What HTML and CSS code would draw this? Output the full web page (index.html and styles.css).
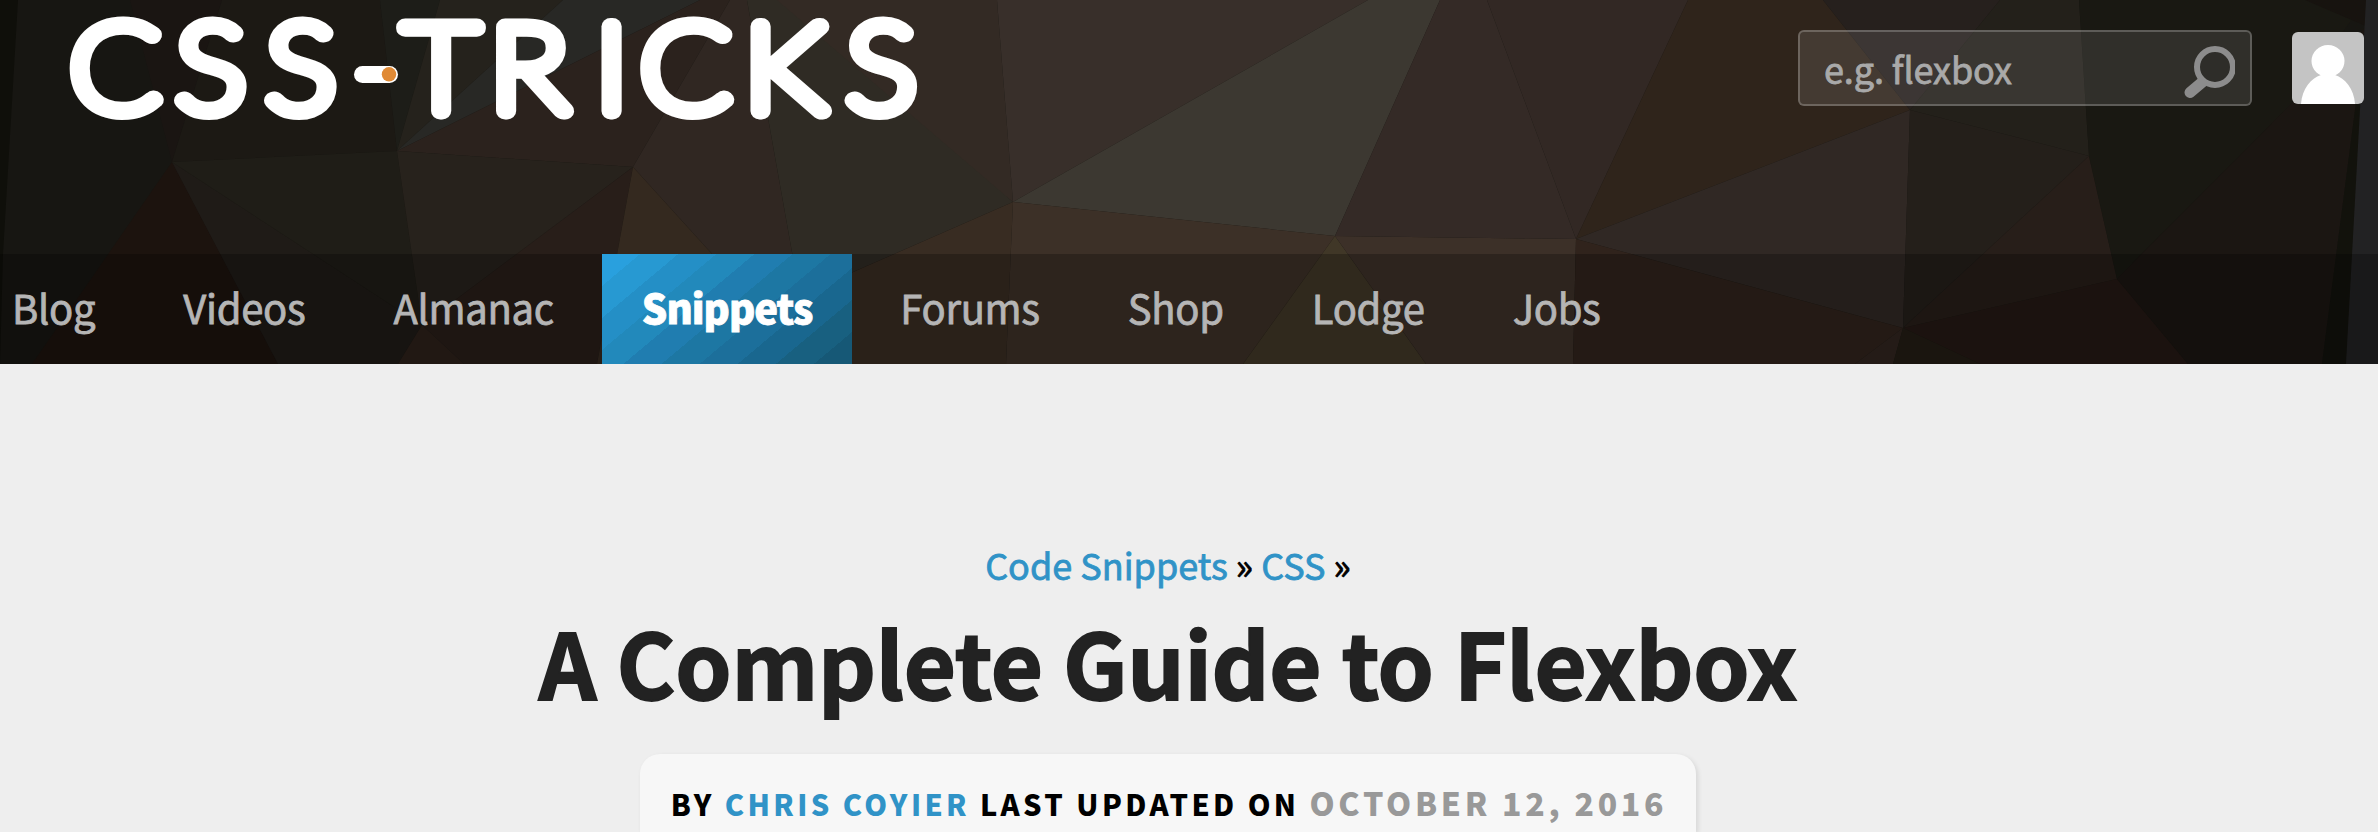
FILE: index.html
```html
<!DOCTYPE html>
<html lang="en">
<head>
<meta charset="utf-8">
<title>A Complete Guide to Flexbox | CSS-Tricks</title>
<link rel="stylesheet" href="styles.css">
</head>
<body>
<header class="site-header">
  <svg class="facets" viewBox="0 0 2378 364" preserveAspectRatio="none" aria-hidden="true">
    <rect width="2378" height="364" fill="#171612"/>
    <path fill="#0f0f0a" d="M0 0H18L3 254L0 364Z"/>
    <path fill="#1a1512" d="M130 0H222L172 162Z"/>
    <path fill="#1c1914" d="M222 0H380L397 151L172 162Z"/>
    <path fill="#1c130e" d="M172 162L32 364H278Z"/>
    <path fill="#1f1b17" d="M172 162L278 364H398L422 325Z"/>
    <path fill="#1f1d17" d="M172 162L397 151L422 325Z"/>
    <path fill="#1d1d18" d="M380 0H440L397 151Z"/>
    <path fill="#25221c" d="M440 0H563L397 151Z"/>
    <path fill="#282825" d="M563 0H700L397 151Z"/>
    <path fill="#2b221d" d="M700 0H730L633 167L397 151Z"/>
    <path fill="#27221c" d="M397 151L633 167L422 325Z"/>
    <path fill="#281e19" d="M633 167L597 364H464L422 325Z"/>
    <path fill="#2d201a" d="M422 325L398 364H464Z"/>
    <path fill="#302722" d="M730 0H747L812 364L633 167Z"/>
    <path fill="#34291f" d="M633 167L812 364H597Z"/>
    <path fill="#332a24" d="M747 0H997L1013 202Z"/>
    <path fill="#2f2b24" d="M747 0L777 0L1013 202L812 290L797 280Z"/>
    <path fill="#382c22" d="M1013 202L1006 364H812V290Z"/>
    <path fill="#382f2a" d="M997 0H1368L1013 202Z"/>
    <path fill="#3c3831" d="M1368 0H1440L1335 236L1013 202Z"/>
    <path fill="#3c3027" d="M1013 202L1335 236L1243 364H1006Z"/>
    <path fill="#403727" d="M1335 236L1426 364H1243Z"/>
    <path fill="#3c3028" d="M1335 236L1576 239L1573 364H1426Z"/>
    <path fill="#342a26" d="M1440 0H1487L1576 239L1335 236Z"/>
    <path fill="#322824" d="M1487 0H1688L1576 239Z"/>
    <path fill="#2f241b" d="M1688 0H1823L1910 110L1576 239Z"/>
    <path fill="#302824" d="M1576 239L1910 110L1903 328Z"/>
    <path fill="#30231c" d="M1576 239L1903 328L1855 364H1573Z"/>
    <path fill="#31251f" d="M1903 328L1893 364H1855Z"/>
    <path fill="#26201d" d="M1823 0H2000L1910 110Z"/>
    <path fill="#23201a" d="M2000 0H2079L2089 156L1910 110Z"/>
    <path fill="#241f1a" d="M1910 110L2089 156L1903 328Z"/>
    <path fill="#271e19" d="M2089 156L2117 279L1903 328Z"/>
    <path fill="#251914" d="M1903 328L2117 279L2188 364H1980Z"/>
    <path fill="#231d15" d="M1903 328L1980 364H1893Z"/>
    <path fill="#191812" d="M2079 0H2366L2290 105L2117 279L2089 156Z"/>
    <path fill="#17130f" d="M2305 0H2366V26Z"/>
    <path fill="#1b1612" d="M2366 26L2322 364H2188L2117 279L2290 105Z"/>
    <path fill="#12120c" d="M2366 20L2346 364H2322L2355 110Z"/>
    <path fill="#222223" d="M2366 0H2378V364H2346Z"/>
  </svg>

  <div class="masthead">
    <a class="logo" href="#" aria-label="CSS-TRICKS">
      <svg width="900" height="140" viewBox="0 0 900 140">
        <text class="logo-text" transform="scale(1.09 1)" y="110.8" x="18.3 115.600 198.200 324.3 403.700 500.5 541.7 637.2 730.8">CSSTRICKS</text>
        <rect x="304" y="66" width="44" height="17" rx="8.5" fill="#fff"/>
        <circle cx="339" cy="74.3" r="7.2" fill="#e08a35"/>
      </svg>
    </a>
    <div class="tools">
      <form class="search">
        <span class="placeholder">e.g. flexbox</span>
        <svg class="glass" width="54" height="58" viewBox="0 0 54 58">
          <path d="M25 38L9 51.500" stroke="#8c8c8c" stroke-width="11" stroke-linecap="round"/>
          <circle cx="34" cy="26" r="18" fill="#2e2d29" stroke="#8c8c8c" stroke-width="6"/>
        </svg>
      </form>
      <svg class="avatar" width="72" height="72" viewBox="0 0 72 72">
        <rect width="72" height="72" fill="#c4c4c4"/>
        <ellipse cx="36" cy="29" rx="16.5" ry="16"/>
        <path d="M9 72C10 57 19 46 29 43H43C53 46 62 57 63 72Z"/>
      </svg>
    </div>
  </div>

  <nav class="nav">
    <a href="#">Blog</a><a href="#">Videos</a><a href="#">Almanac</a><a class="active" href="#">Snippets</a><a href="#">Forums</a><a href="#">Shop</a><a href="#">Lodge</a><a href="#">Jobs</a>
  </nav>
</header>

<main class="article">
  <div class="crumbs"><a href="#">Code Snippets</a> » <a href="#">CSS</a> »</div>
  <h1>A Complete Guide to Flexbox</h1>
  <div class="byline">By <a href="#">Chris Coyier</a> Last Updated On <time>October 12, 2016</time></div>
</main>
</body>
</html>
```
FILE: styles.css
```css
* { box-sizing: border-box; }
body {
  margin: 0;
  height: 832px;
  overflow: hidden;
  background: #eee;
  font-family: "Noto Sans CJK SC", "Noto Sans", sans-serif;
}
a { color: #3093c7; text-decoration: none; }
.site-header { position: relative; height: 364px; display: flex; flex-direction: column; }
.facets { position: absolute; inset: 0; width: 100%; height: 100%; }
.masthead {
  position: relative;
  height: 254px;
  display: flex;
  justify-content: space-between;
  align-items: flex-start;
  padding: 0 14px 0 50px;
}
.logo svg { display: block; overflow: visible; }
.logo-text {
  font: 100 121px Lato, sans-serif;
  fill: #fff;
  stroke: #fff;
  stroke-width: 17px;
  stroke-linejoin: round;
}
.tools { display: flex; gap: 40px; padding-top: 30px; }
.search {
  width: 454px;
  height: 76px;
  display: flex;
  justify-content: space-between;
  align-items: center;
  padding: 0 15px 0 24px;
  border: 2px solid rgba(255,255,255,.22);
  border-radius: 6px;
  background: rgba(255,255,255,.1);
}
.glass { margin-top: 4px; }
.placeholder { color: #a9a9a9; font-size: 36px; line-height: 70px; letter-spacing: -.1px; white-space: nowrap; -webkit-text-stroke: .8px; }
.avatar { margin-top: 2px; border-radius: 6px; fill: #fff; }
.nav {
  position: relative;
  height: 110px;
  display: flex;
  gap: 8px;
  background: rgba(0,0,0,.25);
  font-size: 40px;
  line-height: 106px;
  letter-spacing: -.3px;
}
.nav a { padding: 0 40px; color: #b5b5b5; white-space: nowrap; -webkit-text-stroke: .8px; }
.nav a:first-child { padding-left: 12px; }
.nav .active {
  color: #fff;
  font-weight: 900;
  letter-spacing: -1px;
  background: linear-gradient(140deg, #29a0de 10%, #2799d2 10% 20%, #248fc6 20% 30%, #2289bb 30% 40%, #207db0 40% 50%, #1d77a3 50% 60%, #1c6f9b 60% 70%, #19678f 70% 80%, #186080 80% 90%, #165876 90%);
}
.article {
  height: 468px;
  overflow: hidden;
  display: flex;
  flex-direction: column;
  align-items: center;
  padding: 173px 42px 0 0;
}
.crumbs { font-size: 36px; line-height: 54px; -webkit-text-stroke: .8px; }
h1 {
  margin: 14px 0 0;
  color: #222;
  font-size: 90px;
  font-weight: 700;
  line-height: 112px;
  letter-spacing: -.22px;
  white-space: nowrap;
  -webkit-text-stroke: 1.8px;
}
.byline {
  width: 1056px;
  height: 78px;
  margin-top: 37px;
  padding: 21px 0 0 2px;
  border-radius: 20px 20px 0 0;
  background: #f7f7f7;
  box-shadow: 2px 2px 5px rgba(0,0,0,.1);
  font-size: 29px;
  font-weight: 900;
  line-height: 54px;
  letter-spacing: 3.4px;
  text-align: center;
  text-transform: uppercase;
  white-space: nowrap;
}
.byline time { color: #999; font-size: 32px; letter-spacing: 3.7px; }
```
